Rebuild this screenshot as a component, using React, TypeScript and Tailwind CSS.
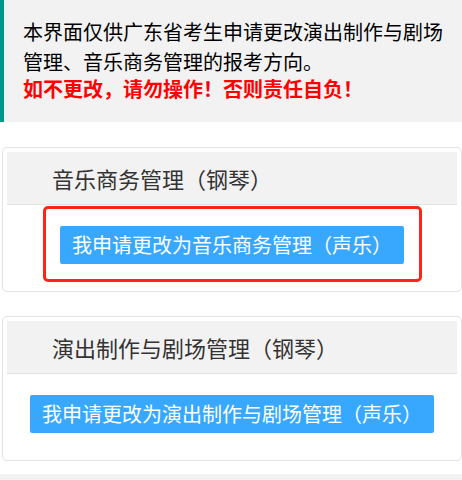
import React from "react";

interface MajorCardProps {
  title: string;
  action: string;
  highlighted?: boolean;
}

const MajorCard: React.FC<MajorCardProps> = ({ title, action, highlighted }) => {
  return (
    <div className="ml-[2px] rounded-[5px] border border-[#e2e2e2] p-[4px]">
      <div className="flex h-[53px] items-center border-b border-[#e2e2e2] bg-[#f2f2f2] pl-[45px] text-[22px] text-[#333]">
        {title}
      </div>
      <div className="flex justify-center pt-[21px] pb-[23px]">
        <div className="relative">
          <button
            type="button"
            className="h-[38px] rounded-[2px] bg-[#38a8ff] px-[12px] text-[20px] leading-[38px] text-white"
          >
            {action}
          </button>
          {highlighted && (
            <div className="pointer-events-none absolute -top-[20px] -right-[18px] -bottom-[18px] -left-[17px] rounded-[5px] border-[3px] border-[#ff2418]" />
          )}
        </div>
      </div>
    </div>
  );
};

const App: React.FC = () => {
  return (
    <div className="min-h-[480px] bg-white font-['Noto_Sans_CJK_SC',sans-serif]">
      <div className="border-l-4 border-[#009688] bg-[#f2f2f2] pt-[17px] pr-[15px] pb-[21px] pl-[19px] text-[20px] text-black">
        <p className="leading-[30px]">
          本界面仅供广东省考生申请更改演出制作与剧场管理、音乐商务管理的报考方向。
        </p>
        <p className="font-bold leading-[24px] text-[#ff0000]">
          如不更改，请勿操作！否则责任自负！
        </p>
      </div>

      <div className="mt-[25px]">
        <MajorCard
          title="音乐商务管理（钢琴）"
          action="我申请更改为音乐商务管理（声乐）"
          highlighted
        />
      </div>

      <div className="mt-[24px]">
        <MajorCard
          title="演出制作与剧场管理（钢琴）"
          action="我申请更改为演出制作与剧场管理（声乐）"
        />
      </div>

      <div className="mt-[13px] h-[20px] bg-[#f2f2f2]" />
    </div>
  );
};

export default App;
